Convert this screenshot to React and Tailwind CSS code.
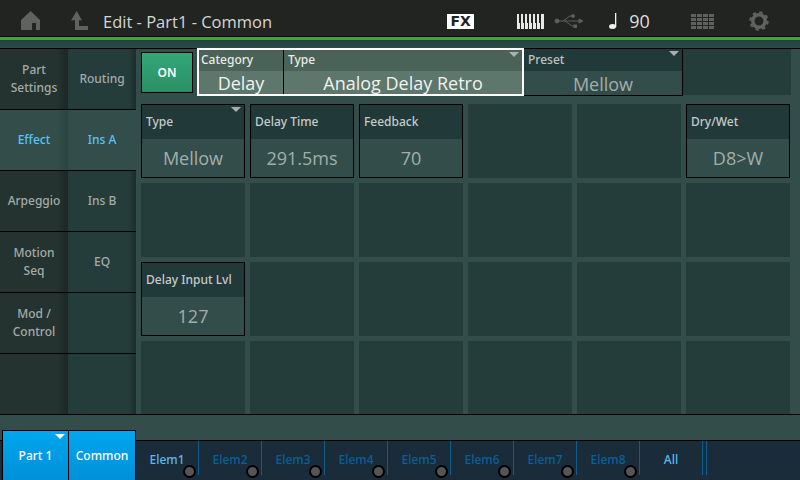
import React from 'react';

const value = "font-['Open_Sans',sans-serif] leading-[20px]";
const label = "font-['Noto_Sans',sans-serif] text-[12px] font-medium";

const leftTabs = [
    { text: ['Part', 'Settings'] },
    { text: ['Effect'], active: true },
    { text: ['Arpeggio'] },
    { text: ['Motion', 'Seq'] },
    { text: ['Mod /', 'Control'] },
    { text: [] },
];
const subTabs = [
    { text: 'Routing' },
    { text: 'Ins A', active: true },
    { text: 'Ins B' },
    { text: 'EQ' },
    { text: '' },
    { text: '' },
];
const elems = ['Elem1', 'Elem2', 'Elem3', 'Elem4', 'Elem5', 'Elem6', 'Elem7', 'Elem8'];

const Arrow = ({ className = 'border-t-[#a8b0ad]' }) => (
    <span className={`absolute right-[3px] top-[2px] w-0 h-0 border-x-[5px] border-x-transparent border-t-[5px] ${className}`} />
);

const Param = ({ title, val, arrow }) => (
    <div className="relative flex flex-col h-[74px] border border-black">
        {arrow && <Arrow />}
        <div className={`h-[34px] flex items-center pl-1 bg-[#22393a] text-[#c4cbc8] ${label}`}>{title}</div>
        <div className={`flex-1 flex items-center justify-center bg-[#334d4a] text-[#a3adaa] text-[18px] ${value}`}>{val}</div>
    </div>
);

const Empty = () => <div className="h-[74px] bg-[#243c3a]" />;

export default function App() {
    return (
        <div className="w-[800px] h-[480px] overflow-hidden flex flex-col bg-[#334d4a]">
            {/* Top bar */}
            <div className="h-[37px] shrink-0 flex items-center pt-[6px] bg-[#222422] border-b border-black">
                <svg className="ml-[21px]" width="20" height="20" viewBox="0 0 20 20" fill="#5f625f">
                    <path d="M9.7 0 L19 9 V19 H15 V12 H11 V19 H0 V9 Z" />
                </svg>
                <svg className="ml-[30px]" width="18" height="20" viewBox="0 0 18 20" fill="#5f625f">
                    <path d="M5.7 0 L11 9.3 H8 V15 H17 V19 H4 V9.3 H0 Z" />
                </svg>
                <span className="ml-[14px] pt-[3px] text-[16.5px] text-[#d4d6d4] font-['Open_Sans',sans-serif]">Edit - Part1 - Common</span>
                <span className="ml-[175px] w-[27px] h-[15px] bg-white text-[#222] text-[14px] leading-[15px] font-black text-center font-['DejaVu_Sans',sans-serif]">FX</span>
                <svg className="ml-[43px]" width="27" height="15" viewBox="0 0 27 15">
                    <rect width="27" height="15" fill="#e8e8e8" />
                    {[3, 7, 11, 15, 19, 23].map((x) => <rect key={x} x={x} y="0" width="1" height="15" fill="#222422" />)}
                    {[2, 6, 10, 14, 18, 22].map((x) => <rect key={x} x={x} y="0" width="2" height="9" fill="#222422" />)}
                </svg>
                <svg className="ml-[10px]" width="29" height="14" viewBox="0 0 29 14" fill="none" stroke="#5c5f5c">
                    <circle cx="3" cy="7" r="2" fill="#5c5f5c" />
                    <path d="M3 7 H26 M9 7 L16 2 H19 M11 7 L18 12 H21" />
                    <path d="M25 5 L29 7 L25 9 Z" fill="#5c5f5c" />
                    <circle cx="19" cy="2" r="1.5" fill="#5c5f5c" />
                    <rect x="20" y="11" width="2.5" height="2.5" fill="#5c5f5c" />
                </svg>
                <svg className="ml-[26px]" width="8" height="16" viewBox="0 0 8 16" fill="#f0f0f0">
                    <rect x="6" y="0" width="1.3" height="14" />
                    <ellipse cx="3.5" cy="13.5" rx="3.5" ry="2.5" />
                </svg>
                <span className={`ml-[12px] text-[18px] text-[#dcdedc] ${value}`}>90</span>
                <svg className="ml-[41px]" width="23" height="15" viewBox="0 0 23 15" fill="#5e615e">
                    {[0, 4, 8, 12].map((y) => [0, 6, 12, 18].map((x) => <rect key={`${x}-${y}`} x={x} y={y} width="5" height="3" />))}
                </svg>
                <svg className="ml-[35px]" width="20" height="20" viewBox="0 0 20 20" fill="none" stroke="#5f625f">
                    <circle cx="10" cy="10" r="6.25" strokeWidth="3.5" />
                    <circle cx="10" cy="10" r="8.7" strokeWidth="2" strokeDasharray="3.42 3.42" />
                </svg>
            </div>
            <div className="h-[3px] shrink-0 bg-[#3fa535]" />
            <div className="h-[9px] shrink-0 bg-gradient-to-b from-[#23423f] to-[#2e4a47] border-b border-black" />

            {/* Middle */}
            <div className="flex-1 flex min-h-0">
                <div className="w-[136px] shrink-0 grid grid-cols-2 content-start">
                    {leftTabs.map((t, i) => (
                        <React.Fragment key={i}>
                            <div className={`h-[61px] border-b border-black flex flex-col items-center justify-center bg-gradient-to-r from-[85%] ${label} leading-[18px] ${t.active ? 'from-[#334d4a] to-[#2b4441] text-[#58c4f4]' : 'from-[#24332f] to-[#1a2825] text-[#a3abaa]'}`}>
                                {t.text.map((s) => <span key={s}>{s}</span>)}
                            </div>
                            <div className={`h-[61px] border-b border-black flex items-center justify-center bg-gradient-to-r from-[90%] ${label} ${subTabs[i].active ? 'from-[#334d4a] to-[#334d4a] text-[#58c4f4]' : 'from-[#243c3a] to-[#1c2d2b] text-[#a3abaa]'}`}>
                                {subTabs[i].text}
                            </div>
                        </React.Fragment>
                    ))}
                </div>
                <div className="flex-1 px-[5px] min-w-0">
                    <div className="flex h-[55px]">
                        <div className="w-[52px] h-[41px] mt-[3px] flex items-center justify-center border border-black bg-gradient-to-b from-[#32a878] to-[#2b8f66] text-white text-[12px] font-semibold font-['Noto_Sans',sans-serif]">ON</div>
                        <div className="ml-[4px] w-[327px] h-[48px] -mt-[1px] relative z-10 flex border-2 border-white">
                            <Arrow />
                            <div className="w-[85px] flex flex-col border-r border-black">
                                <div className={`h-[21px] pl-[2px] pb-[2px] flex items-center bg-[#4a6258] text-[#e8ece8] ${label}`}>Category</div>
                                <div className={`flex-1 flex items-center justify-center pt-[1px] bg-[#5d776c] text-[#f0f2f0] text-[18px] ${value}`}>Delay</div>
                            </div>
                            <div className="flex-1 flex flex-col">
                                <div className={`h-[21px] pl-1 pb-[2px] flex items-center bg-[#4a6258] text-[#e8ece8] ${label}`}>Type</div>
                                <div className={`flex-1 flex items-center justify-center pt-[1px] bg-[#5d776c] text-[#f0f2f0] text-[18px] ${value}`}>Analog Delay Retro</div>
                            </div>
                        </div>
                        <div className="relative w-[159px] h-[48px] -mt-[1px] flex flex-col border border-black border-l-0">
                            <Arrow />
                            <div className={`h-[22px] pl-1 pb-[1px] flex items-center bg-[#22393a] text-[#bcc4c1] ${label}`}>Preset</div>
                            <div className={`flex-1 flex items-center justify-center pt-[1px] bg-[#334d4a] text-[#a3adaa] text-[18px] ${value}`}>Mellow</div>
                        </div>
                        <div className="w-[108px] h-[46px] bg-[#243c3a]" />
                    </div>
                    <div className="grid grid-cols-[repeat(6,104px)] gap-[5px]">
                        <Param title="Type" val="Mellow" arrow />
                        <Param title="Delay Time" val="291.5ms" />
                        <Param title="Feedback" val="70" />
                        <Empty />
                        <Empty />
                        <Param title="Dry/Wet" val="D8>W" />
                        {Array.from({ length: 6 }).map((_, i) => <Empty key={`a${i}`} />)}
                        <Param title="Delay Input Lvl" val="127" />
                        {Array.from({ length: 5 }).map((_, i) => <Empty key={`b${i}`} />)}
                        {Array.from({ length: 6 }).map((_, i) => <Empty key={`c${i}`} />)}
                    </div>
                </div>
            </div>

            {/* Bottom */}
            <div className="h-[66px] shrink-0 relative bg-[#334d4a] border-t border-black flex flex-col justify-end">
                <div className="h-[40px] bg-[#1a2b3a] border-t border-black flex items-start pl-[136px]">
                    {elems.map((e, i) => (
                        <div key={e} className={`relative w-[63px] h-[34px] pt-[3px] flex items-center justify-center border-r border-[#0f5d8c] ${label} ${i === 0 ? 'text-[#5cb8ea]' : 'text-[#0a6096]'}`}>
                            {e}
                            <span className="absolute right-[2px] bottom-[-3px] w-[13px] h-[13px] rounded-full bg-[#555] border-[2px] border-black" />
                        </div>
                    ))}
                    <div className={`w-[63px] h-[34px] pt-[3px] flex items-center justify-center border-r border-[#0f5d8c] text-[#5cb8ea] ${label}`}>All</div>
                    <div className="w-[4px] h-[34px] border-r border-[#0f5d8c]" />
                </div>
                <div className="absolute left-[2px] bottom-0 w-[134px] h-[50px] flex border border-black border-b-0">
                    <div className={`relative w-[66px] flex items-center justify-center border-r border-black bg-gradient-to-b from-[#00a7ef] to-[#0090d8] text-white ${label}`}>
                        Part 1
                        <span className="absolute right-[3px] top-[3px] w-0 h-0 border-x-[5px] border-x-transparent border-t-[5px] border-t-white" />
                    </div>
                    <div className={`flex-1 flex items-center justify-center bg-gradient-to-b from-[#00a7ef] to-[#0090d8] text-white ${label}`}>Common</div>
                </div>
            </div>
        </div>
    );
}
